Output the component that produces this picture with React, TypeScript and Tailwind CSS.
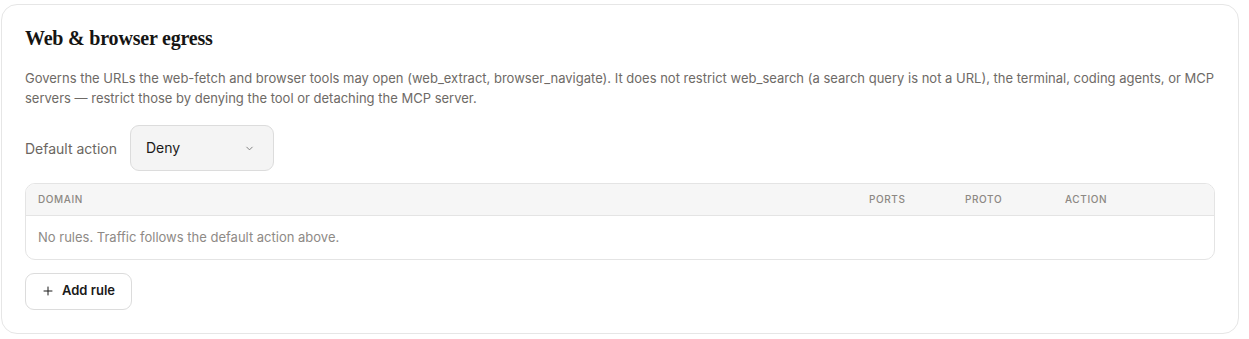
import React from "react";

export default function App() {
  const sans = { fontFamily: "Inter, 'Noto Sans', sans-serif" };
  return (
    <div className="bg-white w-[1249px] h-[339px] pt-[4px] pl-[1px]" style={sans}>
      <div className="w-[1238px] h-[330px] rounded-[16px] border border-[#e6e6e6] bg-white pl-[23px] pr-[23px] pt-[20px]">
        <h2
          className="text-[20px] font-bold text-[#161514] leading-[26px] tracking-[-0.2px]"
          style={{ fontFamily: "'Liberation Serif', 'DejaVu Serif', serif" }}
        >
          Web &amp; browser egress
        </h2>
        <p className="mt-[17px] text-[13px] leading-[20px] text-[#6e6a66]">
          Governs the URLs the web-fetch and browser tools may open (web_extract, browser_navigate). It does not restrict web_search (a search query is not a URL), the terminal, coding agents, or MCP servers — restrict those by denying the tool or detaching the MCP server.
        </p>
        <div className="mt-[17px] flex items-center gap-[13px]">
          <span className="text-[14px] text-[#6b6661]">Default action</span>
          <button className="w-[144px] h-[46px] rounded-[9px] border border-[#dcdcdc] bg-[#f4f4f4] flex items-center justify-between pl-[15px] pr-[18px] text-[14px] text-[#1a1a1a]">
            <span className="-mt-[2px]">Deny</span>
            <svg width="11" height="11" viewBox="0 0 24 24" fill="none" stroke="#777" strokeWidth="2" strokeLinecap="round" strokeLinejoin="round">
              <path d="M6 9l6 6 6-6" />
            </svg>
          </button>
        </div>
        <div className="mt-[12px] rounded-[10px] border border-[#e4e4e4] overflow-hidden">
          <div className="h-[32px] bg-[#f6f6f6] border-b border-[#e4e4e4] grid grid-cols-[831px_96px_100px_1fr] items-center pl-[12px] text-[10px] tracking-[0.6px] text-[#8c8883] font-medium">
            <span>DOMAIN</span>
            <span>PORTS</span>
            <span>PROTO</span>
            <span>ACTION</span>
          </div>
          <div className="h-[43px] flex items-center pl-[12px] text-[13px] text-[#8e8a86]">
            No rules. Traffic follows the default action above.
          </div>
        </div>
        <button className="mt-[13px] h-[37px] w-[107px] rounded-[9px] border border-[#dcdcdc] bg-white flex items-center gap-[8px] pl-[16px] pb-[2px] text-[13px] font-semibold text-[#1a1a1a]">
          <svg width="12" height="12" viewBox="0 0 24 24" fill="none" stroke="#1a1a1a" strokeWidth="2" strokeLinecap="round">
            <path d="M12 4v16M4 12h16" />
          </svg>
          Add rule
        </button>
      </div>
    </div>
  );
}
